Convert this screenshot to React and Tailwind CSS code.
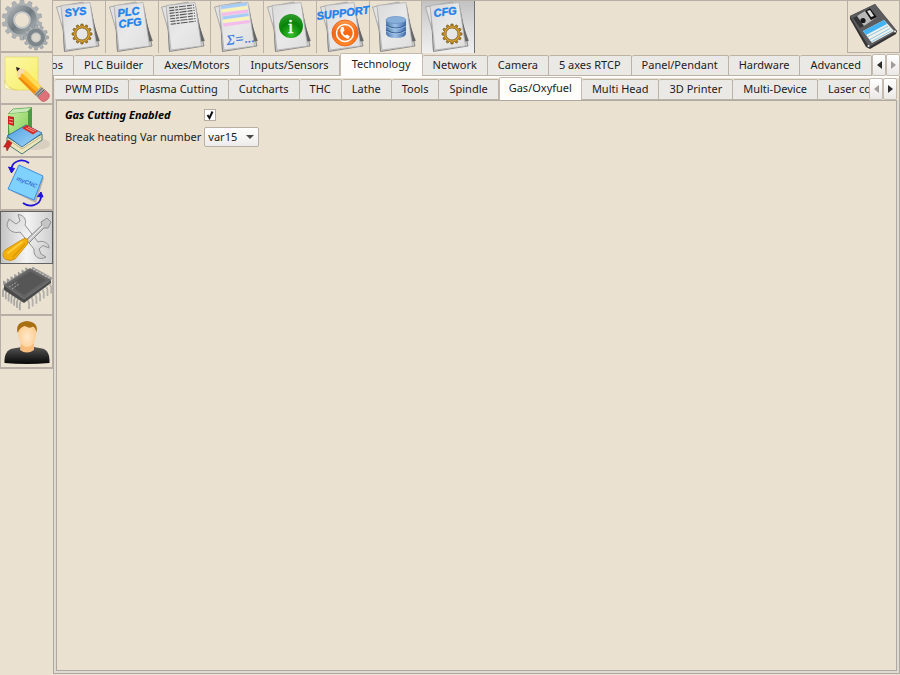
import React, { useState } from "react";

const gearPath = (cx, cy, outer, inner, teeth, hole) => {
  const step = (Math.PI * 2) / teeth;
  const at = (r, a) =>
    `${(cx + r * Math.cos(a)).toFixed(2)},${(cy + r * Math.sin(a)).toFixed(2)}`;
  let d = "";
  for (let i = 0; i < teeth; i++) {
    const a = i * step - Math.PI / 2;
    d += `${i === 0 ? "M" : "L"}${at(inner, a - step * 0.3)} L${at(outer, a - step * 0.2)} `;
    d += `L${at(outer, a + step * 0.2)} L${at(inner, a + step * 0.3)} `;
  }
  d += `Z M${cx + hole},${cy} A${hole},${hole} 0 1 0 ${cx - hole},${cy} A${hole},${hole} 0 1 0 ${cx + hole},${cy} Z`;
  return d;
};

const Icon = ({ children }) => (
  <svg viewBox="0 0 52 52" className="block h-[52px] w-[52px] shrink-0 overflow-visible" aria-hidden="true">
    {children}
  </svg>
);

// Gradients shared by all of the icons
const Gradients = () => (
  <svg className="absolute h-0 w-0" aria-hidden="true">
    <defs>
      <linearGradient id="paper" x1="0" y1="0" x2="1" y2="1">
        <stop offset="0" stopColor="#d9d9d9" />
        <stop offset="0.5" stopColor="#e9e9e9" />
        <stop offset="1" stopColor="#dedede" />
      </linearGradient>
      <linearGradient id="steel" x1="0" y1="0" x2="1" y2="1">
        <stop offset="0" stopColor="#a9aeb1" />
        <stop offset="0.5" stopColor="#6f797f" />
        <stop offset="1" stopColor="#a9b0b3" />
      </linearGradient>
      <linearGradient id="note" x1="0" y1="0" x2="1" y2="1">
        <stop offset="0" stopColor="#fdf8a8" />
        <stop offset="1" stopColor="#f7ee67" />
      </linearGradient>
      <radialGradient id="green" cx="0.5" cy="0.85" r="0.8">
        <stop offset="0" stopColor="#35c02c" />
        <stop offset="0.6" stopColor="#078407" />
        <stop offset="1" stopColor="#2c9a2c" />
      </radialGradient>
      <linearGradient id="orange" x1="0" y1="0" x2="0" y2="1">
        <stop offset="0" stopColor="#ff9a4a" />
        <stop offset="0.5" stopColor="#f9640f" />
        <stop offset="1" stopColor="#ff8a2a" />
      </linearGradient>
      <linearGradient id="disk" x1="0" y1="0" x2="1" y2="0">
        <stop offset="0" stopColor="#4a78b0" />
        <stop offset="0.45" stopColor="#9dc0e6" />
        <stop offset="1" stopColor="#3f6ca6" />
      </linearGradient>
      <linearGradient id="metal" x1="0" y1="0" x2="1" y2="1">
        <stop offset="0" stopColor="#d2d2d2" />
        <stop offset="0.5" stopColor="#f2f2f2" />
        <stop offset="1" stopColor="#c4c4c4" />
      </linearGradient>
      <radialGradient id="skin" cx="0.5" cy="0.6" r="0.6">
        <stop offset="0" stopColor="#ffe9cc" />
        <stop offset="1" stopColor="#fcc98c" />
      </radialGradient>
      <linearGradient id="shirt" x1="0" y1="0" x2="0" y2="1">
        <stop offset="0" stopColor="#555555" />
        <stop offset="1" stopColor="#050505" />
      </linearGradient>
      <linearGradient id="book" x1="0" y1="0" x2="1" y2="1">
        <stop offset="0" stopColor="#c6eda0" />
        <stop offset="1" stopColor="#7fca51" />
      </linearGradient>
      <linearGradient id="cover" x1="0" y1="0" x2="1" y2="1">
        <stop offset="0" stopColor="#4c9be0" />
        <stop offset="1" stopColor="#a8dcfa" />
      </linearGradient>
    </defs>
  </svg>
);

const Paper = ({ children }) => (
  <Icon>
    <path d="M11 50 L44.500 40.500 L38 5 L9 8 Z" fill="#8d8d8d" />
    <path d="M3.500 6 L30 1 L46.500 39.500 L16 49 Z" fill="#e2e2e2" stroke="#9c9c9c" strokeWidth="0.8" />
    <path d="M9 9 L38 10 L46 45 L11.500 50.500 Z" fill="#cfcfcf" stroke="#777" strokeWidth="0.8" />
    <path d="M36.500 9 L46.500 40 L43 40.500 Z" fill="#666" />
    <path d="M8 4.500 L37 1.500 L43.500 45 L13 49 Z" fill="url(#paper)" stroke="#b0b0b0" strokeWidth="0.8" />
    {children}
  </Icon>
);

const GoldGear = ({ cx, cy }) => (
  <g>
    <path d={gearPath(cx, cy, 10, 8, 12, 6)} fill="#b88620" stroke="#765516" strokeWidth="0.7" fillRule="evenodd" />
    <circle cx={cx} cy={cy} r="7.200" fill="none" stroke="#dda83c" strokeWidth="1" />
  </g>
);

const Caption = ({ x, y, size, children }) => (
  <text
    x={x}
    y={y}
    fontSize={size}
    transform={`rotate(-7 ${x} ${y})`}
    fill="#1e82ee"
    fontFamily="Liberation Sans, sans-serif"
    fontWeight="bold"
    fontStyle="italic"
    stroke="#1e82ee"
    strokeWidth="0.4"
  >
    {children}
  </text>
);

const GearsIcon = () => (
  <Icon>
    <path d={gearPath(21, 21, 20, 16.500, 14, 7.500)} fill="#adb2b4" stroke="#9a9fa1" strokeWidth="0.6" fillRule="evenodd" />
    <circle cx="21" cy="21" r="11.500" fill="none" stroke="url(#steel)" strokeWidth="6.500" />
    <circle cx="21" cy="21" r="8" fill="none" stroke="#c6cacc" strokeWidth="1.500" />
    <path d={gearPath(35, 38.500, 12.500, 10, 12, 4.500)} fill="#aab0b3" stroke="#858c90" strokeWidth="0.6" fillRule="evenodd" />
    <circle cx="35" cy="38.500" r="7" fill="none" stroke="#7c868b" strokeWidth="4" />
    <circle cx="35" cy="38.500" r="4.500" fill="#ddd8ce" stroke="#bcc0c1" strokeWidth="1" />
  </Icon>
);

const NoteIcon = () => (
  <Icon>
    <path d="M4 5 H37 V38 H15 L4 33 Z" fill="url(#note)" stroke="#ded35b" strokeWidth="0.6" />
    <path d="M4 28 Q6 38 16 38 Q9 38 4 36 Z" fill="#fffbd0" stroke="#ddd05a" strokeWidth="0.5" />
    <path d="M15 15 L24 18 L43 37 L35 44 L17 26 Z" fill="#ffb21c" />
    <path d="M24 18 L43 37 L40 39.500 L21 21 Z" fill="#ffdc5a" />
    <path d="M19 25 L37.500 42 L35 44 L17 26 Z" fill="#ee8a0d" />
    <path d="M15 15 L24.500 18 L22 22 L20 21.500 L19.500 25 L17 26 Z" fill="#f6dcac" />
    <path d="M15 15 L19 16.200 L16.200 19.500 Z" fill="#222" />
    <path d="M40 34.500 L45 39 L37.500 46 L33 42 Z" fill="#aaa" />
    <path d="M41.500 36 L34.500 43 M43.500 37.500 L36 44.500" stroke="#555" strokeWidth="1" />
    <path d="M44.500 38.500 L48 42 Q49.500 45 46 48 Q43 50.500 40.500 49 L37 45.500 Z" fill="#df7278" stroke="#bd5259" strokeWidth="0.6" />
  </Icon>
);

const BooksIcon = () => (
  <Icon>
    <ellipse cx="35" cy="39" rx="14" ry="6" fill="#d8cfc0" />
    <path d="M7 9 L12 4 L31 2.500 L31 27 L13 39 L7 37 Z" fill="#4b9940" />
    <path d="M7 9 L26 7 L31 2.500 L12 4 Z" fill="#c9e9b8" stroke="#55a14a" strokeWidth="0.6" />
    <path d="M7 9 L27 7 L27 30 L9 36 Z" fill="url(#book)" />
    <path d="M7 11 L13 12 V21 L7 19 Z" fill="#d31d1d" />
    <path d="M8 14 L12 15 M8 17 L12 18" stroke="#f3aaa2" />
    <path d="M6 32 L21 41 L41 29 L41 35 L21 49 L6 39 Z" fill="#eee6ba" stroke="#457b76" strokeWidth="1" />
    <path d="M8 35 L21 44 L40 32" fill="none" stroke="#aaa37e" strokeWidth="0.7" />
    <path d="M6 31 L25 20 L41 28 L21 42 Z" fill="url(#cover)" stroke="#26659e" strokeWidth="0.8" />
    <path d="M21 23 L26 20 L37 26 L32 29.500 Z" fill="#d72822" />
    <path d="M25 23 L33 27 M27 22 L35 26" stroke="#f4bcb3" strokeWidth="0.8" />
    <path d="M7 35 L11 38 L6 46 L5 42 L2.500 42 Z" fill="#cf2320" stroke="#90201b" strokeWidth="0.5" />
  </Icon>
);

const RotateIcon = () => (
  <Icon>
    <path d="M20 9 L43 20 L35 45 L10 33 Z" fill="#b6b0a5" />
    <path d="M18 7 L42 18 L33 42 L7 31 Z" fill="#7fd2fd" stroke="#3e8fdf" strokeWidth="1" />
    <text x="15" y="22" fontSize="6" transform="rotate(22 15 22)" fontFamily="Liberation Sans, sans-serif" fontStyle="italic" fontWeight="bold" fill="#386bd0">
      myCNC
    </text>
    <path d="M28 5 C21 0 12 3 10.500 10" fill="none" stroke="#1e12dc" strokeWidth="1.800" />
    <path d="M7.500 9 L13.500 10.500 L10.500 15 Z" fill="#1e12dc" stroke="#1e12dc" />
    <path d="M22 45 C28 49.500 39 48 40 39" fill="none" stroke="#1e12dc" strokeWidth="1.800" />
    <path d="M36.500 38.500 L42 39 L40 34 Z" fill="#1e12dc" stroke="#1e12dc" />
  </Icon>
);

const ToolsIcon = () => (
  <Icon>
    <path
      d="M8 8 L15 13 L19 10 L17 3.500 C23 4 26 9 24 14 L37 31 C42 29 48 32 48 37 L42 34.500 L38 38 L40 43 L45 46 C39 50 32 46 33 38 L19 21 C13 23 6 19 6 13 Z"
      fill="url(#metal)"
      stroke="#929292"
      strokeWidth="1"
      strokeLinejoin="round"
    />
    <path d="M25 29 L41 14 L40 11 L46 7 L50 11 L47 17 L43 17 L28 32 Z" fill="#c5c5c5" stroke="#888" strokeWidth="0.9" />
    <path d="M27 30 L42 15" stroke="#f3f3f3" strokeWidth="1" />
    <path d="M22 28 Q25 26 27 29 L26.500 33 L14 48 Q9 51 4 48 Q0 44 4 39 Z" fill="#f3af0c" stroke="#c58a09" strokeWidth="0.8" />
    <path d="M21 31 L7 42" stroke="#ffd03c" strokeWidth="1.700" strokeLinecap="round" />
    <path d="M24 33 L12 46" stroke="#dc9707" strokeWidth="1.200" strokeLinecap="round" />
  </Icon>
);

const pins = [0, 1, 2, 3, 4, 5, 6];

const ChipIcon = () => (
  <Icon>
    {pins.map((i) => (
      <g key={i} fill="none" strokeWidth="1.800">
        <path d={`M${3 + i * 2.800} ${25 + i * 2.200} l-1 3 v6`} stroke="#aaa8a4" />
        <path d={`M${27 + i * 3.700} ${37 - i * 2.600} l1 3 v6`} stroke="#b2b0ac" />
        <path d={`M${5 + i * 3.700} ${20 - i * 2.200} l-2 -1 v3`} stroke="#999" />
        <path d={`M${31 + i * 2.900} ${7 + i * 1.600} l1 -2 l2 1`} stroke="#999" />
      </g>
    ))}
    <path d="M3 22 L29 5.500 L50 17 V20 L23 40 L3 27 Z" fill="#4a4a4a" />
    <path d="M3 22 L29 5.500 L50 17 L23 36 Z" fill="#646464" stroke="#7a7a7a" strokeWidth="0.8" />
    <path d="M8 22 L29 8.500 L45 17 L23 32 Z" fill="#565656" />
    <path d="M8 24 L16 19 M11 26 L18 21" stroke="#969696" strokeWidth="1.200" strokeDasharray="2 1" />
  </Icon>
);

const UserIcon = () => (
  <Icon>
    <path d="M3.500 47 Q3 34 12 32.500 L21 31 H33 L41 32.500 Q49 34 48.500 47 Q26 49 3.500 47 Z" fill="url(#shirt)" />
    <path d="M20 25 H33 V34 Q26 39 19 34 Z" fill="#f8bd7c" />
    <path d="M17 14 Q17 6 26 6 Q35 6 35 15 Q36 30 26 31 Q17 30 17 14 Z" fill="url(#skin)" />
    <path d="M16.500 17 Q14 6 26 5 Q38 6 35.500 17 Q35 12 32 10.500 Q29 13 24 10 Q19 11 16.500 17 Z" fill="#a76f12" />
  </Icon>
);

const SaveIcon = () => (
  <Icon>
    <path d="M2 15 L27 3 L49 30 L48 33 L22 48 L18 46 L2 18 Z" fill="#333" />
    <path d="M2 15 L27 3 L49 30 L21 46 Z" fill="#5c5c5e" />
    <path d="M5 17 L11 14 L18 24 L12 27 Z" fill="#343436" />
    <path d="M9 15 L22 7 L29 16 L16 25 Z" fill="#b9b9b9" />
    <path d="M17 10 L22 7 L29 16 L23 19 Z" fill="#111" />
    <path d="M19 10 L22 9 L26 15 L23 16 Z" fill="#ddd" />
    <circle cx="15" cy="19.500" r="2.600" fill="#161616" />
    <path d="M15 30 L36 19 L46 30 L24 42 Z" fill="#f2f0e8" />
    <path d="M15 30 L36 19 L39 23 L18 34 Z" fill="#43b3f3" />
    <path d="M19 36 L40 25 M21 39 L42 27.500 M23 41 L44 29.500" stroke="#7ec4e8" strokeWidth="0.9" />
    <circle cx="20.500" cy="45" r="1" fill="#eee" />
    <circle cx="47" cy="30.500" r="1" fill="#eee" />
  </Icon>
);

const listLines = [0, 1, 2, 3, 4, 5, 6];
const stripes = ["#a6ccf8", "#faf4b4", "#f5bbea", "#a6ccf8", "#faf4b4", "#f5bbea"];

const tools = [
  {
    name: "System settings",
    icon: (
      <Paper>
        <Caption x={12} y={16} size={11}>SYS</Caption>
        <GoldGear cx={29} cy={33} />
      </Paper>
    ),
  },
  {
    name: "PLC configuration",
    icon: (
      <Paper>
        <Caption x={12} y={16} size={11}>PLC</Caption>
        <Caption x={13} y={27} size={11}>CFG</Caption>
      </Paper>
    ),
  },
  {
    name: "Program listing",
    icon: (
      <Paper>
        {listLines.map((i) => (
          <path key={i} d={`M${11 + i * 0.300} ${7 + i * 2.700} l25 -3`} stroke="#555" strokeWidth="1.100" strokeDasharray="5 1 3 1 7 1" />
        ))}
      </Paper>
    ),
  },
  {
    name: "Calculations",
    icon: (
      <Paper>
        {stripes.map((color, i) => (
          <path key={i} d={`M${10 + i * 0.500} ${6.500 + i * 3.500} l26 -3.500`} stroke={color} strokeWidth="3" />
        ))}
        <text x="16" y="44" fontSize="14" transform="rotate(-7 16 44)" fill="#3a7be0" stroke="#3a7be0" strokeWidth="0.3" fontFamily="Liberation Serif, serif" fontStyle="italic">
          Σ=...
        </text>
      </Paper>
    ),
  },
  {
    name: "Information",
    icon: (
      <Paper>
        <circle cx="27" cy="25" r="12" fill="url(#green)" />
        <text x="24" y="32" fontSize="19" fontFamily="Liberation Serif, serif" fill="#f5fff2" stroke="#f5fff2" strokeWidth="0.5">i</text>
      </Paper>
    ),
  },
  {
    name: "Support",
    icon: (
      <Paper>
        <Caption x={0} y={19} size={11}>SUPPORT</Caption>
        <circle cx="28" cy="32" r="13" fill="url(#orange)" stroke="#e65b0e" strokeWidth="0.8" />
        <circle cx="28" cy="32" r="8.500" fill="none" stroke="#fff" strokeWidth="1.500" />
        <path d="M24 26 Q21 34 31 38 L33 35.500 L30 33.500 L28 34.500 Q26 33 26 31 L27.500 29.500 L26.500 26 Z" fill="#fff" />
      </Paper>
    ),
  },
  {
    name: "Database",
    icon: (
      <Paper>
        <path d="M17 19 V33 Q18 37 27 37 Q36 37 37 33 V19 Z" fill="url(#disk)" />
        <ellipse cx="27" cy="19" rx="10" ry="3.500" fill="#88afd9" stroke="#6892c3" strokeWidth="0.7" />
        <path d="M17 24 Q27 30 37 24 M17 29 Q27 35 37 29" fill="none" stroke="#365f96" strokeWidth="1.200" />
        <path d="M17 25 Q27 31 37 25 M17 30 Q27 36 37 30" fill="none" stroke="#b8d5f1" strokeWidth="0.6" />
      </Paper>
    ),
  },
  {
    name: "Configuration",
    active: true,
    icon: (
      <Paper>
        <Caption x={12} y={16} size={11}>CFG</Caption>
        <GoldGear cx={30} cy={33} />
      </Paper>
    ),
  },
];

const sideItems = [
  { name: "Machine", icon: <GearsIcon /> },
  { name: "Edit", icon: <NoteIcon /> },
  { name: "Library", icon: <BooksIcon /> },
  { name: "Rotate view", icon: <RotateIcon /> },
  { name: "Settings", icon: <ToolsIcon />, active: true },
  { name: "Hardware", icon: <ChipIcon /> },
  { name: "User", icon: <UserIcon /> },
];

const mainTabs = [
  "PLC Builder",
  "Axes/Motors",
  "Inputs/Sensors",
  "Technology",
  "Network",
  "Camera",
  "5 axes RTCP",
  "Panel/Pendant",
  "Hardware",
  "Advanced",
];

const subTabs = [
  "PWM PIDs",
  "Plasma Cutting",
  "Cutcharts",
  "THC",
  "Lathe",
  "Tools",
  "Spindle",
  "Gas/Oxyfuel",
  "Multi Head",
  "3D Printer",
  "Multi-Device",
  "Laser control",
];

const Tab = ({ label, active, activePadding, onClick }) => (
  <button
    type="button"
    role="tab"
    aria-selected={active}
    onClick={onClick}
    className={
      active
        ? `h-[23px] shrink-0 rounded-t-xs border border-b-0 border-[#c4bbae] bg-[#fefdfb] pb-[2px] whitespace-nowrap ${activePadding}`
        : "h-[21px] shrink-0 rounded-t-xs border border-l-0 border-[#bcb3a6] bg-[#ebe9e6] px-[10px] pb-px whitespace-nowrap"
    }
  >
    {label}
  </button>
);

const Scroller = ({ direction, disabled }) => (
  <button
    type="button"
    disabled={disabled}
    aria-label={`Scroll ${direction}`}
    className="flex h-[22px] w-[14px] shrink-0 items-center justify-center rounded-xs border border-[#c4bbae] bg-linear-to-b from-white to-[#ebe9e6]"
  >
    <svg viewBox="0 0 5 8" className={disabled ? "h-2 w-[5px] fill-[#a09c97]" : "h-2 w-[5px] fill-[#2d2d2d]"}>
      {direction === "left" ? <path d="M5 0 V8 L0 4 Z" /> : <path d="M0 0 V8 L5 4 Z" />}
    </svg>
  </button>
);

const App = () => {
  const [mainTab, setMainTab] = useState("Technology");
  const [subTab, setSubTab] = useState("Gas/Oxyfuel");
  const [enabled, setEnabled] = useState(true);
  const [breakVar, setBreakVar] = useState("var15");

  return (
    <div className="flex min-h-screen bg-[#eae1d1] font-['Noto_Sans',sans-serif] text-[11px] leading-4 text-[#1c1c1c]">
      <Gradients />
      <nav className="grid h-[369px] w-[53px] shrink-0 grid-rows-7">
        {sideItems.map((item) => (
          <button
            key={item.name}
            type="button"
            aria-label={item.name}
            className={
              item.active
                ? "flex min-h-0 items-center justify-center overflow-hidden border border-[#626262] bg-linear-to-r from-[#c4c4c4] via-[#f4f4f4] to-[#cfcfcf]"
                : "flex min-h-0 items-center justify-center overflow-hidden border border-t-0 border-b-2 border-[#b7afa5]"
            }
          >
            {item.icon}
          </button>
        ))}
      </nav>

      <main className="flex min-w-0 flex-1 flex-col pb-px">
        <header className="flex h-[53px] shrink-0 justify-between border-t border-[#b7afa5]">
          <div className="grid w-[422px] grid-cols-8">
            {tools.map((tool) => (
              <button
                key={tool.name}
                type="button"
                aria-label={tool.name}
                className={
                  tool.active
                    ? "flex min-w-0 justify-center border-r border-[#707070] bg-linear-to-b from-[#c2c2c2] via-[#dcdcdc] to-[#f0f0f0]"
                    : "flex min-w-0 justify-center border-r border-[#bab2a7]"
                }
              >
                {tool.icon}
              </button>
            ))}
          </div>
          <button type="button" aria-label="Save" className="flex w-[53px] justify-center overflow-hidden border border-t-0 border-[#b7afa5]">
            <SaveIcon />
          </button>
        </header>

        <div className="flex h-[23px] shrink-0 items-end">
          <div role="tablist" className="flex min-w-0 flex-1 items-end overflow-hidden">
            <div className="flex w-[21px] shrink-0 justify-end overflow-hidden">
              <Tab label="Macros" active={false} />
            </div>
            {mainTabs.map((label) => (
              <Tab
                key={label}
                label={label}
                active={label === mainTab}
                activePadding="px-[11px]"
                onClick={() => setMainTab(label)}
              />
            ))}
          </div>
          <Scroller direction="left" />
          <Scroller direction="right" disabled />
        </div>

        <section className="flex flex-1 flex-col border border-t-0 border-[#b0a99f] bg-[#dedad4] px-[2px] pb-[2px]">
          <div className="-mx-[2px] flex h-[24px] shrink-0 items-end border-t-2 border-[#fefdfb] bg-[#eae1d1] pr-[2px] pl-[1px]">
            <div role="tablist" className="flex min-w-0 flex-1 items-end overflow-hidden">
              {subTabs.map((label) => (
                <Tab
                  key={label}
                  label={label}
                  active={label === subTab}
                  activePadding="px-[9px]"
                  onClick={() => setSubTab(label)}
                />
              ))}
            </div>
            <Scroller direction="left" disabled />
            <Scroller direction="right" />
          </div>

          <div className="flex-1 border border-[#b0a99f] bg-[#eae1d1] px-2 pt-1">
            <div className="grid grid-cols-[auto_1fr] items-center gap-x-[3px] gap-y-[2px]">
              <label htmlFor="gas-enabled" className="font-bold text-black italic">
                Gas Cutting Enabled
              </label>
              <div className="relative flex h-5 items-center">
                <input
                  id="gas-enabled"
                  type="checkbox"
                  checked={enabled}
                  onChange={(e) => setEnabled(e.target.checked)}
                  className="h-3 w-3 appearance-none border border-[#b5ada1] bg-white"
                />
                {enabled && (
                  <svg viewBox="0 0 12 12" className="pointer-events-none absolute left-0 h-3 w-3">
                    <path d="M3.500 6 L5.500 9 L8.500 2.500" fill="none" stroke="#111" strokeWidth="2" />
                  </svg>
                )}
              </div>
              <label htmlFor="break-var">Break heating Var number</label>
              <div className="relative flex w-[55px] items-center">
                <select
                  id="break-var"
                  value={breakVar}
                  onChange={(e) => setBreakVar(e.target.value)}
                  className="h-5 w-full appearance-none rounded-xs border border-[#b8b0a4] bg-linear-to-b from-white to-[#eeecea] pl-[3px]"
                >
                  <option>var14</option>
                  <option>var15</option>
                  <option>var16</option>
                </select>
                <svg viewBox="0 0 8 4" className="pointer-events-none absolute right-[5px] h-1 w-2 fill-[#4a4a4a]">
                  <path d="M0 0 H8 L4 4 Z" />
                </svg>
              </div>
            </div>
          </div>
        </section>
      </main>
    </div>
  );
};

export default App;
